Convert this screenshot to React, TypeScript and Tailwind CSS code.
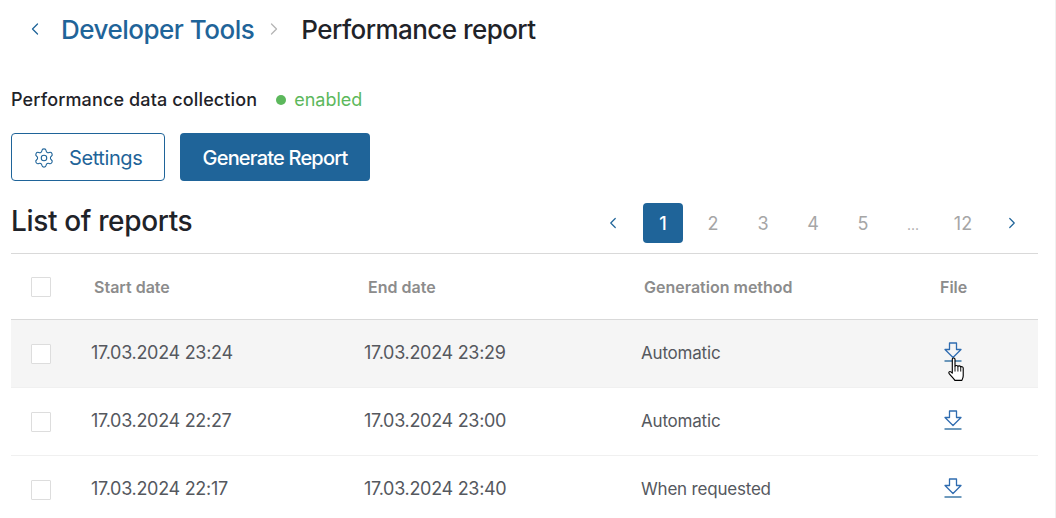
import React from 'react';
import { ChevronLeft, ChevronRight, Settings } from 'lucide-react';

const REPORTS = [
  { start: '17.03.2024 23:24', end: '17.03.2024 23:29', method: 'Automatic', hover: true },
  { start: '17.03.2024 22:27', end: '17.03.2024 23:00', method: 'Automatic', hover: false },
  { start: '17.03.2024 22:17', end: '17.03.2024 23:40', method: 'When requested', hover: false },
];

const PAGES = ['1', '2', '3', '4', '5', '...', '12'];

const DownloadIcon = () => (
  <svg width="18" height="20" viewBox="0 0 18 20" fill="none" stroke="#2f6cb0" strokeWidth="1.3">
    <path d="M5.5 1h7v6.500h4.500L9 15.500 1 7.500h4.500z" strokeLinejoin="round" />
    <path d="M0.500 19h17" stroke="#1f6499" strokeWidth="1.300" />
  </svg>
);

const HandCursor = () => (
  <svg width="23" height="26" viewBox="0 0 20 25" className="absolute left-[2px] top-[15px]">
    <path
      d="M5 2.200c0-1.600 2.600-1.600 2.600 0V9c.4-1.200 2.600-1.200 2.800.2.4-1 2.500-1 2.700.5.5-.8 2.400-.5 2.400 1v7.300c0 2-.8 3-1.300 4.500H7.500c-1-1.600-3-3.500-5.500-6.500-1-1.300.4-2.600 1.600-1.700L5 15.500z"
      fill="#ffffff"
      stroke="#000000"
      strokeWidth="1.100"
      strokeLinejoin="round"
    />
    <path d="M7.600 9v5M10.400 9.500v4.500M13.100 10v4" stroke="#000000" strokeWidth="0.900" />
  </svg>
);

const Checkbox = () => <div className="w-5 h-5 bg-white border border-[#dddddd] rounded-[1px]" />;

export default function App() {
  return (
    <div className="w-[1056px] h-[518px] overflow-hidden bg-white font-['Inter',sans-serif] pl-[11px] pr-[17px] border-r border-[#f0f0f0]">
      {/* Breadcrumb */}
      <div className="h-[58px] flex items-center pl-[14px]">
        <ChevronLeft className="w-[20px] h-[20px] text-[#1f6499]" strokeWidth={1.5} />
        <span className="ml-[16px] text-[26px] font-medium tracking-[-0.5px] text-[#1f6499]">Developer Tools</span>
        <ChevronRight className="ml-[10px] w-[20px] h-[20px] text-[#b5b5b5]" strokeWidth={1.5} />
        <span className="ml-[17px] text-[26px] font-medium tracking-[-0.55px] text-[#1f2329]">Performance report</span>
      </div>

      {/* Collection status */}
      <div className="mt-[28px] h-[26px] flex items-center">
        <span className="text-[18px] font-medium tracking-[0.13px] text-[#1f2329]">Performance data collection</span>
        <span className="ml-[19px] mt-[2px] w-[10px] h-[10px] rounded-full bg-[#5cb85c]" />
        <span className="ml-[8px] text-[18px] text-[#5cb85c]">enabled</span>
      </div>

      {/* Buttons */}
      <div className="mt-[21px] flex gap-[15px]">
        <button className="w-[154px] h-[48px] flex items-center pl-[21px] pt-[1px] border border-[#1f6499] rounded-[4px] text-[#1f6499] text-[20px] tracking-[-0.4px]">
          <Settings className="w-[22px] h-[22px]" strokeWidth={1.2} />
          <span className="ml-[14px]">Settings</span>
        </button>
        <button className="w-[190px] h-[48px] pt-[1px] bg-[#1f6499] rounded-[4px] text-white text-[20px] font-medium tracking-[-0.8px]">
          Generate Report
        </button>
      </div>

      {/* List header */}
      <div className="mt-[22px] h-[51px] flex items-start justify-between border-b border-[#d9d9d9]">
        <h2 className="text-[28px] leading-[36px] font-medium tracking-[-0.35px] text-[#1f2329]">List of reports</h2>
        <div className="flex items-center">
          <ChevronLeft className="w-[18px] h-[18px] text-[#1f6499] mr-[21px]" strokeWidth={1.6} />
          {PAGES.map((page, i) => (
            <div
              key={page}
              className={`w-[40px] h-[40px] mr-[10px] flex items-center justify-center rounded-[4px] ${
                i === 0
                  ? 'bg-[#1f6499] text-white font-medium text-[18px]'
                  : page === '...'
                    ? 'text-[#a6a6a6] text-[14px] pt-[3px]'
                    : 'text-[#a6a6a6] text-[18px]'
              }`}
            >
              {page}
            </div>
          ))}
          <ChevronRight className="ml-[10px] mr-[17px] w-[18px] h-[18px] text-[#1f6499]" strokeWidth={1.6} />
        </div>
      </div>

      {/* Table header */}
      <div className="h-[66px] grid grid-cols-[83px_274px_276px_296px_1fr] items-center border-b border-[#d9d9d9] text-[16px] font-semibold text-[#8c8c8c]">
        <div className="pl-[20px]"><Checkbox /></div>
        <div>Start date</div>
        <div>End date</div>
        <div>Generation method</div>
        <div>File</div>
      </div>

      {/* Rows */}
      {REPORTS.map((report) => (
        <div
          key={report.start}
          className={`h-[68px] grid grid-cols-[80px_273px_277px_303px_1fr] items-center border-b border-[#f0f0f0] text-[18px] tracking-[-0.3px] text-[#55585e] ${
            report.hover ? 'bg-[#f5f5f5]' : 'bg-white'
          }`}
        >
          <div className="pl-[20px]"><Checkbox /></div>
          <div className="pb-[2px]">{report.start}</div>
          <div className="pb-[2px]">{report.end}</div>
          <div className="text-[17px] tracking-[-0.2px]">{report.method}</div>
          <div className="relative w-[18px] h-[20px] -mt-[4px]">
            <DownloadIcon />
            {report.hover && <HandCursor />}
          </div>
        </div>
      ))}
    </div>
  );
}
